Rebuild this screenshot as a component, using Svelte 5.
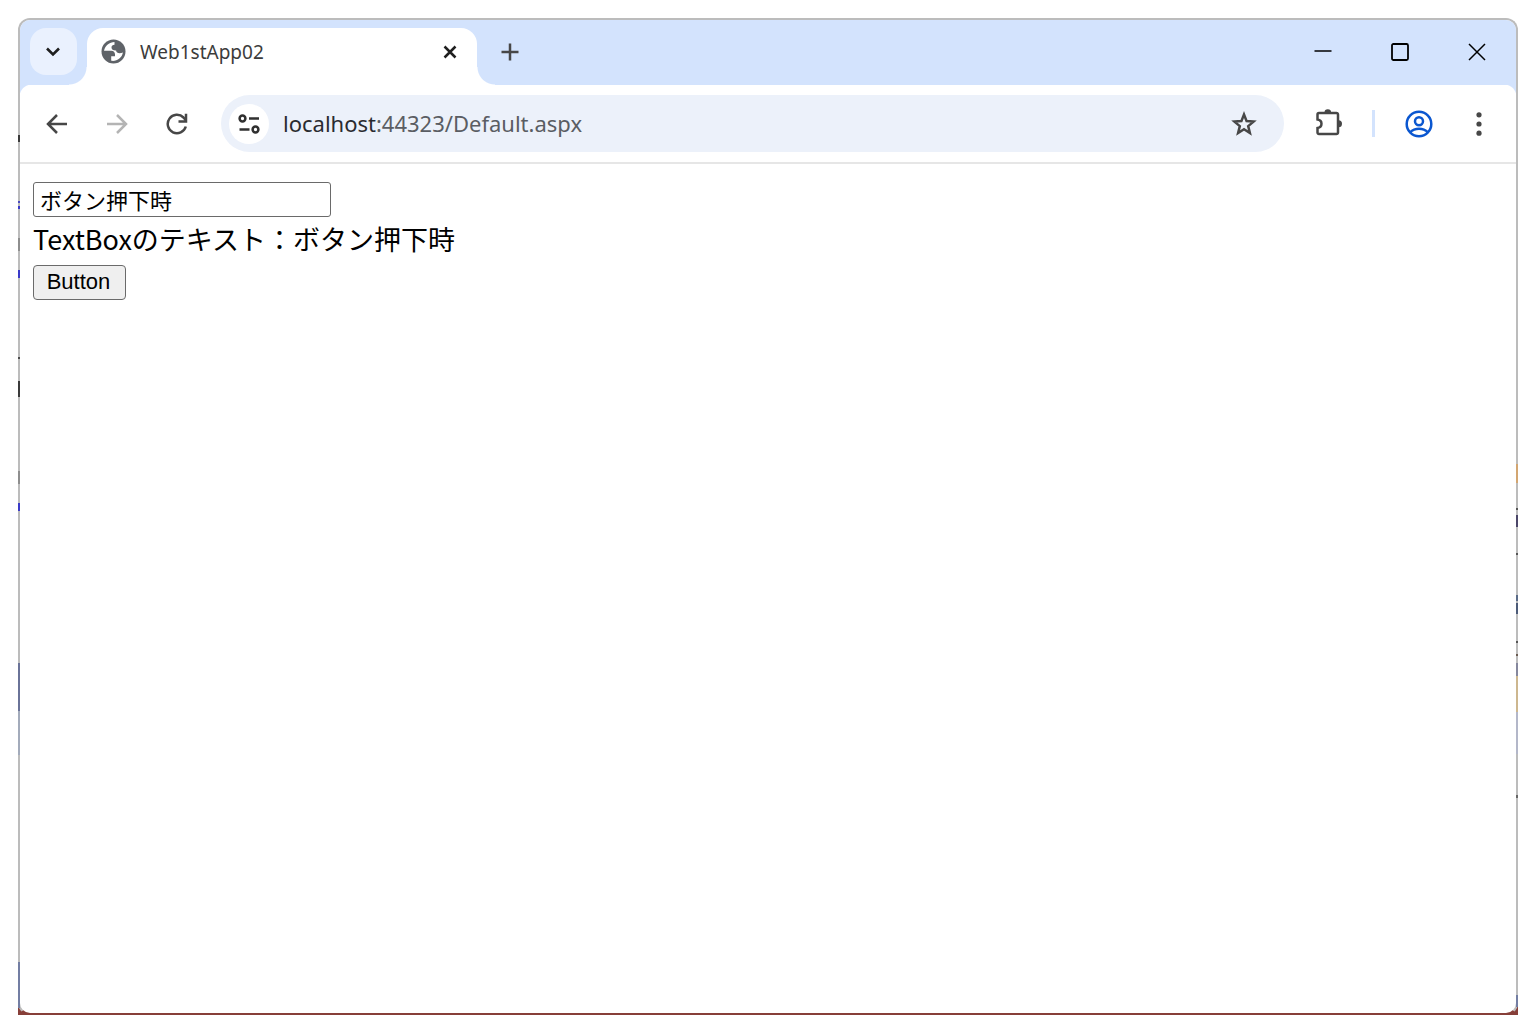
<script>
	const tabTitle = 'Web1stApp02';
	const host = 'localhost';
	const path = ':44323/Default.aspx';

	// what shows through the thin window frame: [top, height, colour]
	const leftEdge = [
		[117, 7, '#3a3a3a'],
		[183, 2, '#4a4ac0'],
		[188, 3, '#3a3ac8'],
		[220, 13, '#8e8e8e'],
		[252, 8, '#3a3ac8'],
		[339, 2, '#4a4a4a'],
		[363, 16, '#3a3a3a'],
		[453, 13, '#8e8e8e'],
		[485, 8, '#3a3ac8'],
		[645, 48, '#6a7398'],
		[693, 44, '#a3abbb'],
		[944, 46, '#737ea3']
	];
	const rightEdge = [
		[446, 19, '#d3a671'],
		[490, 2, '#555'],
		[497, 12, '#4b4668'],
		[535, 2, '#555'],
		[577, 6, '#5a6b88'],
		[585, 11, '#4c5b78'],
		[623, 2, '#555'],
		[636, 2, '#6a5a50'],
		[645, 13, '#85879d'],
		[658, 36, '#cdb78f'],
		[694, 42, '#b3b7c9'],
		[777, 3, '#666'],
		[977, 12, '#737ea3']
	];

	let text = $state('ボタン押下時');
	let label = $state('ボタン押下時');

	function submit() {
		label = text;
	}
</script>

<div class="desktop">
	<div class="window">
		<header class="tabstrip">
			<button class="tab-search" aria-label="タブを検索">
				<svg width="16" height="10" viewBox="0 0 16 10"><path d="M1 1.500l6 6 6-6" fill="none" stroke="#1f1f1f" stroke-width="2.6" /></svg>
			</button>

			<div class="tab">
				<svg width="26" height="26" viewBox="0 0 26 26">
					<circle cx="13.500" cy="12.500" r="12" fill="#5f6368" />
					<path d="M14.500 3C9.500 3 5 6.500 4 11.800h7.300c2.300 0 3.700 1.400 3.700 3.700v1.800h-3.800v4.500c5.200 1 10.800-2.700 11.700-8.300-1 .5-2 .8-3.300.8-2 0-3.300-1-3.500-2.800-2.700.2-4.600-.9-4.600-3 0-1.700 1.200-2.700 3-2.700z" fill="#fff" />
				</svg>
				<span class="tab-title">{tabTitle}</span>
				<button class="tab-close" aria-label="タブを閉じる">
					<svg width="14" height="14" viewBox="0 0 14 14"><path d="M1.500 1.500l11 11M12.500 1.500l-11 11" stroke="#1f1f1f" stroke-width="2.5" /></svg>
				</button>
			</div>

			<button class="new-tab" aria-label="新しいタブ">
				<svg width="18" height="18" viewBox="0 0 18 18"><path d="M9 0.500v17M0.500 9h17" stroke="#474747" stroke-width="2.5" /></svg>
			</button>

			<div class="caption">
				<button aria-label="最小化">
					<svg width="18" height="18" viewBox="0 0 18 18"><path d="M0.500 8h17" stroke="#000" stroke-width="1.500" /></svg>
				</button>
				<button aria-label="最大化">
					<svg width="18" height="18" viewBox="0 0 18 18"><rect x="1" y="1" width="16" height="16" rx="1.500" fill="none" stroke="#000" stroke-width="1.800" /></svg>
				</button>
				<button aria-label="閉じる">
					<svg width="18" height="18" viewBox="0 0 18 18"><path d="M1 1l16 16M17 1L1 17" stroke="#000" stroke-width="1.500" /></svg>
				</button>
			</div>
		</header>

		<nav class="toolbar">
			<button class="tool" aria-label="戻る">
				<svg width="22" height="22" viewBox="0 0 22 22"><path d="M21 11H2.500M11 2l-9 9 9 9" fill="none" stroke="#474747" stroke-width="2.500" /></svg>
			</button>
			<button class="tool" aria-label="進む" disabled>
				<svg width="22" height="22" viewBox="0 0 22 22"><path d="M1 11h18.500M11 2l9 9-9 9" fill="none" stroke="#b4b4b4" stroke-width="2.500" /></svg>
			</button>
			<button class="tool" aria-label="再読み込み">
				<svg width="22" height="22" viewBox="0 0 22 22">
					<path d="M19.800 13.500A9.200 9.200 0 1 1 17.500 4.500L20 7.500" fill="none" stroke="#474747" stroke-width="2.500" />
					<path d="M20 0.800v7.600h-7.500" fill="none" stroke="#474747" stroke-width="2.500" />
				</svg>
			</button>

			<div class="omnibox">
				<button class="site-info" aria-label="サイト情報を表示">
					<svg width="22" height="20" viewBox="0 0 22 20" fill="none" stroke="#303030" stroke-width="2.500">
						<circle cx="4.500" cy="4.500" r="2.900" />
						<path d="M11 4.500H21M1.500 15.500H11.500" />
						<circle cx="17.500" cy="15.500" r="2.900" />
					</svg>
				</button>
				<a class="url" href="#top"><span class="host">{host}</span>{path}</a>
				<button class="star" aria-label="このタブをブックマークに追加します">
					<svg width="26" height="26" viewBox="0 0 26 26"><path d="M13 3.500l2.600 6.600 7 .5-5.400 4.500 1.700 6.900L13 18.300l-5.900 3.700 1.700-6.900-5.400-4.500 7-.5z" fill="none" stroke="#474747" stroke-width="2.500" /></svg>
				</button>
			</div>

			<button class="tool" aria-label="拡張機能">
				<svg width="30" height="30" viewBox="0 0 30 30">
					<path d="M6 4h17.500a1.500 1.500 0 0 1 1.500 1.500v18a1.500 1.500 0 0 1-1.500 1.500H6a1.500 1.500 0 0 1-1.500-1.500V19c5.300-.8 5.300-7.700 0-8.500V5.500A1.500 1.500 0 0 1 6 4z" fill="none" stroke="#474747" stroke-width="2.500" />
					<path d="M11.500 3.500a3.300 3.300 0 0 1 6.600 0zM25.500 11.200a3.500 3.500 0 0 1 0 7z" fill="#474747" />
				</svg>
			</button>
			<span class="divider"></span>
			<button class="tool" aria-label="プロフィール">
				<svg width="28" height="28" viewBox="0 0 28 28" fill="none" stroke="#0b57d0" stroke-width="2.500">
					<circle cx="14" cy="14" r="12.300" />
					<circle cx="14" cy="11.300" r="4" />
					<path d="M5 22.300c5-4.600 13-4.600 18 0" />
				</svg>
			</button>
			<button class="tool" aria-label="メニュー">
				<svg width="6" height="24" viewBox="0 0 6 24" fill="#474747"><circle cx="3" cy="2.800" r="2.600" /><circle cx="3" cy="12" r="2.600" /><circle cx="3" cy="21.200" r="2.600" /></svg>
			</button>
		</nav>

		<main id="top">
			<input type="text" bind:value={text} aria-label="TextBox" />
			<span class="label">TextBoxのテキスト：{label}</span>
			<button class="submit" onclick={submit}>Button</button>
		</main>
	</div>

	<svg class="edge left" width="2" height="990" aria-hidden="true">
		{#each leftEdge as [y, height, fill]}
			<rect x="0" {y} width="2" {height} {fill} />
		{/each}
	</svg>
	<svg class="edge right" width="2" height="990" aria-hidden="true">
		{#each rightEdge as [y, height, fill]}
			<rect x="0" {y} width="2" {height} {fill} />
		{/each}
	</svg>
</div>

<style>
	:global(body) {
		margin: 0;
		background: #fff;
	}

	.desktop,
	.desktop * {
		box-sizing: border-box;
	}

	.desktop {
		position: relative;
		display: flex;
		min-height: calc(100vh - 37px);
		margin: 18px 18px 0;
		background: linear-gradient(to top, #873f39 8px, #fff 8px);
	}

	.window {
		flex: 1;
		display: flex;
		flex-direction: column;
		border: 2px solid #bcbcbc;
		border-bottom-color: #873f39;
		border-radius: 12px;
		background: #fff;
		overflow: hidden;
	}

	.edge {
		position: absolute;
		top: 0;
	}

	.left {
		left: 0;
	}

	.right {
		right: 0;
	}

	button {
		display: flex;
		align-items: center;
		justify-content: center;
		flex: none;
		padding: 0;
		border: 0;
		background: transparent;
	}

	svg {
		display: block;
		flex: none;
	}

	.tabstrip {
		display: flex;
		height: 65px;
		padding: 8px 0 0 10px;
		background: #d3e3fd;
	}

	.tab-search {
		width: 47px;
		height: 47px;
		border-radius: 16px;
		background: #eaf1fe;
	}

	.tab {
		position: relative;
		display: flex;
		align-items: center;
		width: 390px;
		height: 57px;
		margin-left: 10px;
		padding: 0 20px 10px 13px;
		border-radius: 16px 16px 0 0;
		background: #fff;
	}

	/* flared feet of the active tab */
	.tab::before,
	.tab::after {
		content: '';
		position: absolute;
		bottom: 0;
		width: 18px;
		height: 18px;
	}

	.tab::before {
		right: 100%;
		background: radial-gradient(circle at 0 0, transparent 17px, #fff 18px);
	}

	.tab::after {
		left: 100%;
		background: radial-gradient(circle at 100% 0, transparent 17px, #fff 18px);
	}

	.tab-title {
		flex: 1;
		margin-left: 14px;
		font: 19px/26px 'Noto Sans', sans-serif;
		color: #3c3c3c;
	}

	.new-tab {
		width: 46px;
		height: 47px;
		margin-left: 10px;
	}

	.caption {
		display: flex;
		height: 47px;
		margin-left: auto;
		padding-right: 1px;
	}

	.caption button {
		width: 77px;
	}

	.toolbar {
		display: flex;
		align-items: center;
		height: 79px;
		padding: 0 7px;
		border-bottom: 2px solid #e6e6e6;
		background: radial-gradient(circle at 12px 12px, #fff 12px, #d3e3fd 13px) 0 0 / 12px 12px no-repeat,
			radial-gradient(circle at 0 12px, #fff 12px, #d3e3fd 13px) 100% 0 / 12px 12px no-repeat,
			#fff;
	}

	.tool {
		width: 60px;
		height: 56px;
	}

	.omnibox {
		flex: 1;
		display: flex;
		align-items: center;
		height: 57px;
		margin: 0 14px;
		padding: 0 27px 0 8px;
		border-radius: 29px;
		background: #ecf1fa;
	}

	.site-info {
		width: 40px;
		height: 40px;
		border-radius: 50%;
		background: #fff;
	}

	.url {
		flex: 1;
		margin-left: 14px;
		padding-bottom: 2px;
		font: 22px/30px 'Noto Sans', sans-serif;
		color: #5a5d63;
		text-decoration: none;
	}

	.host {
		color: #2a2b30;
	}

	.divider {
		width: 3px;
		height: 27px;
		margin: 0 14px;
		background: #d3e3fd;
	}

	main {
		display: flex;
		flex-direction: column;
		align-items: flex-start;
		padding: 18px 13px;
	}

	main input {
		width: 298px;
		height: 35px;
		padding: 0 6px 2px;
		border: 1px solid #6a6a6a;
		border-radius: 3px;
		font: 22px/30px 'Noto Sans CJK JP', sans-serif;
		color: #000;
	}

	.label {
		margin: 2px 0 6px;
		font: 27px/40px 'Noto Sans CJK JP', sans-serif;
		color: #000;
	}

	.submit {
		width: 93px;
		height: 35px;
		padding: 0 2px 1px 0;
		border: 1px solid #6a6a6a;
		border-radius: 4px;
		background: #efefef;
		font: 22px/30px 'Liberation Sans', Arial, sans-serif;
		color: #000;
	}
</style>
